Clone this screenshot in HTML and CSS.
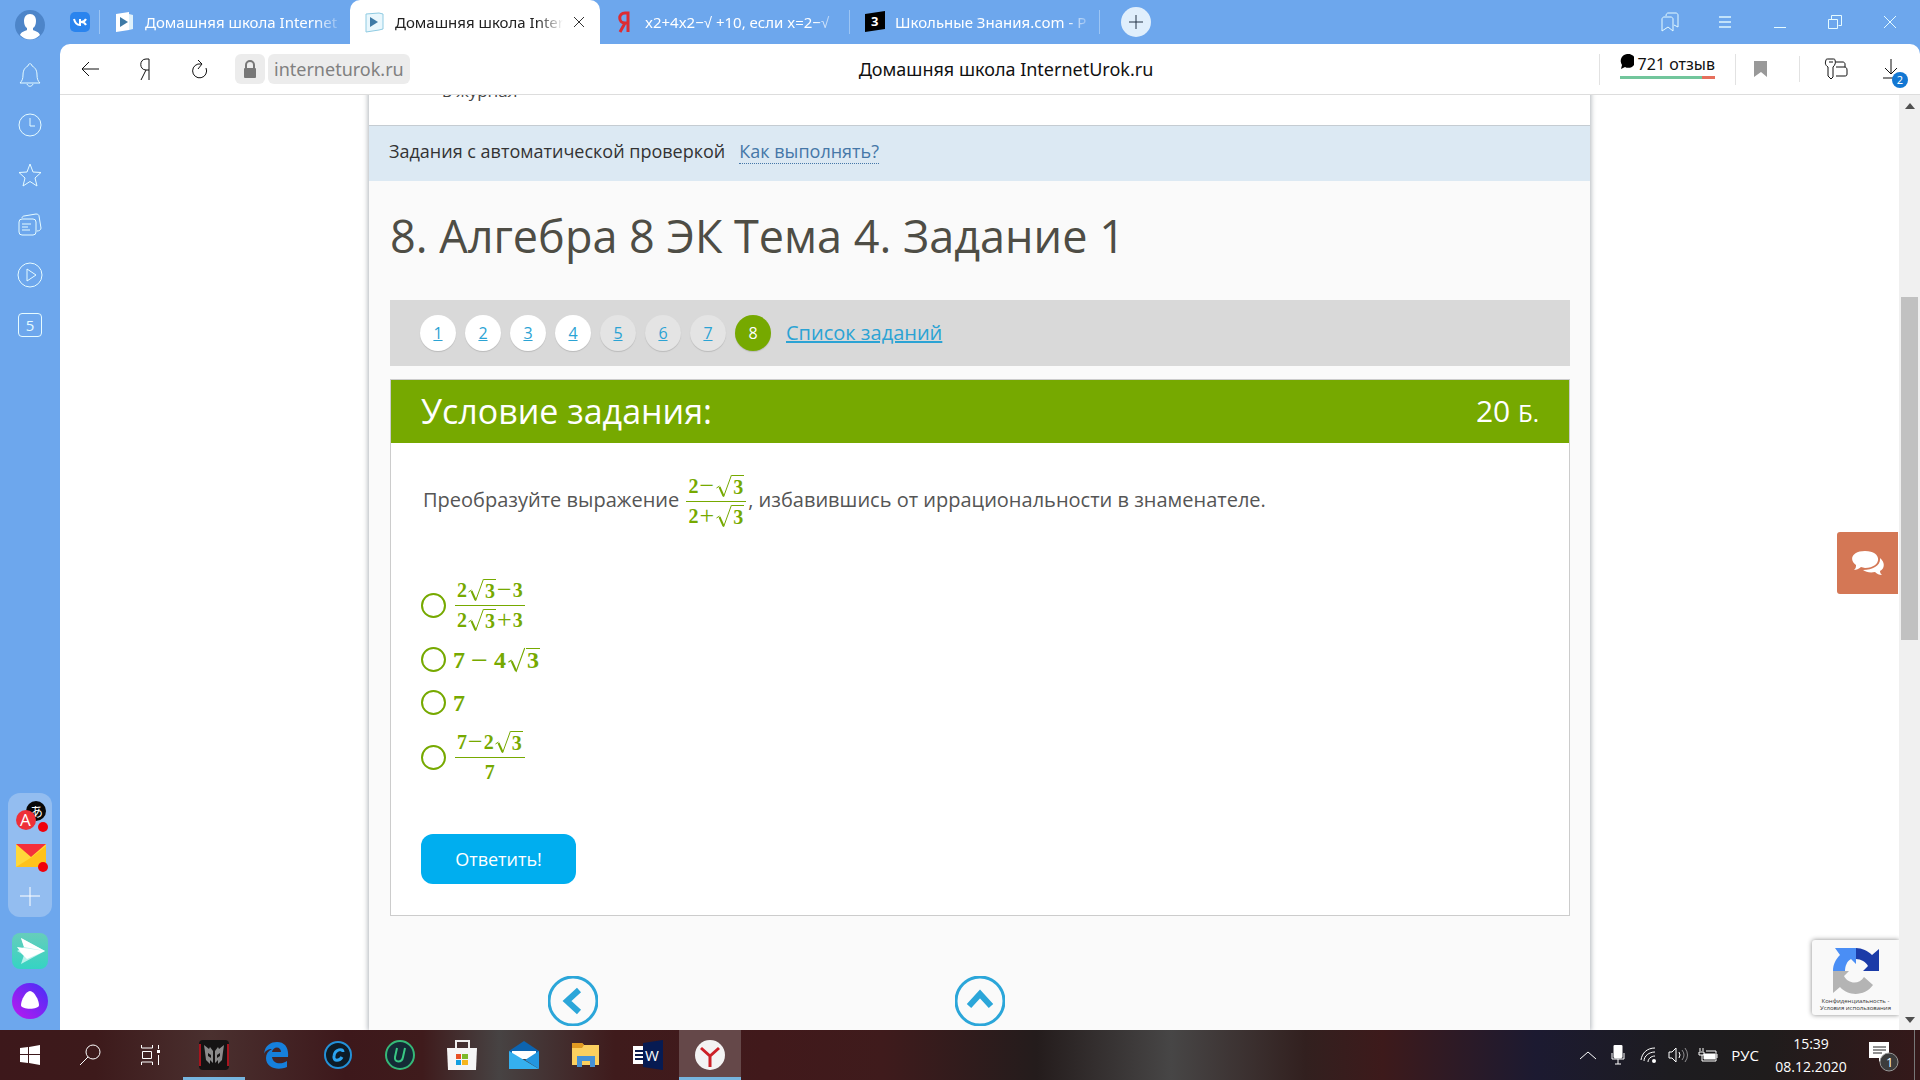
FILE: index.html
```html
<!DOCTYPE html>
<html lang="ru">
<head>
    <meta charset="UTF-8">
    <meta name="viewport" content="width=device-width, initial-scale=1.0">
    <title>Домашняя школа InternetUrok.ru</title>
    <link rel="stylesheet" href="styles.css">
</head>
<body>

    <div class="browser">
        <aside class="sidebar">
            <button class="side-btn" aria-label="Профиль">
                <svg width="30" height="30" viewBox="0 0 30 30"><circle cx="15" cy="15" r="15" fill="#4d85c9"/><path d="M15 4c4 0 6 3 6 7 0 3-1 6-3 7v2c2 1 6 2 7 5-6 6-14 6-20 0 1-3 5-4 7-5v-2c-2-1-3-4-3-7 0-4 2-7 6-7z" fill="#fff"/></svg>
            </button>
            <button class="side-btn" aria-label="Уведомления">
                <svg class="line" width="24" height="26" viewBox="0 0 24 26"><path d="M2 21c2-2 3-4 3-8 0-6 3-8 5-9 0-3 4-3 4 0 2 1 5 3 5 9 0 4 1 6 3 8zM9 22c1 3 5 3 6 0"/></svg>
            </button>
            <button class="side-btn" aria-label="История">
                <svg class="line" width="24" height="24" viewBox="0 0 24 24"><circle cx="12" cy="12" r="11"/><path d="M12 5v8h5"/></svg>
            </button>
            <button class="side-btn" aria-label="Избранное">
                <svg class="line" width="24" height="24" viewBox="0 0 24 24"><path d="M12 1l3 8 8 .5-6 5.500 2 8-7-4.500-7 4.500 2-8-6-5.500 8-.5z"/></svg>
            </button>
            <button class="side-btn" aria-label="Коллекции">
                <svg class="line" width="24" height="24" viewBox="0 0 24 24"><rect x="1" y="6" width="17" height="16" rx="3"/><path d="M4 5c0-1 1-2 2-2l12-2c2 0 3 1 3 2l2 12c0 2-2 3-4 3M4 11h9M4 14h6M4 17h8"/></svg>
            </button>
            <button class="side-btn" aria-label="Видео">
                <svg class="line" width="26" height="26" viewBox="0 0 26 26"><circle cx="13" cy="13" r="12"/><path d="M10 7l9 6-9 6z"/></svg>
            </button>
            <button class="side-btn"><span class="tab-count">5</span></button>

            <div class="side-spacer"></div>

            <div class="side-group">
                <button class="side-app" aria-label="Переводчик">
                    <svg width="34" height="34" viewBox="0 0 34 34"><circle cx="21" cy="12" r="10" fill="#080808"/><text x="15" y="17" font-size="13" fill="#fff" font-family="Noto Sans CJK JP, sans-serif">あ</text><circle cx="11" cy="21" r="10" fill="#ee3038"/><text x="5" y="27" font-size="17" fill="#fff" font-family="Open Sans, sans-serif">A</text><circle cx="28" cy="28" r="5" fill="#f0000c"/></svg>
                </button>
                <button class="side-app" aria-label="Почта">
                    <svg width="34" height="34" viewBox="0 0 34 34"><path d="M1 5h30v23H1z" fill="#ffd83a"/><path d="M31 7v21H1l16-10z" fill="#ffc21c"/><path d="M1 5h30L16 18z" fill="#f5303b"/><circle cx="28" cy="28" r="5" fill="#f0000c"/></svg>
                </button>
                <button class="side-app" aria-label="Добавить">
                    <svg width="34" height="34" viewBox="0 0 34 34"><path d="M15 8v19M5 17h20" fill="none" stroke="#fff"/></svg>
                </button>
            </div>
            <button class="side-btn" aria-label="Телепорт">
                <svg width="36" height="36" viewBox="0 0 36 36"><defs><linearGradient id="mint" x2="0" y2="1"><stop stop-color="#66cdbb"/><stop offset="1" stop-color="#35d4c3"/></linearGradient></defs><rect width="36" height="36" rx="8" fill="url(#mint)"/><path d="M9 5l24 13L9 31l3-9-7-4 7-4z" fill="#b9f2ec"/><path d="M9 5l24 13-21-4zM5 14l28 4-23 3zM10 21l23-3-18 8z" fill="#fff"/></svg>
            </button>
            <button class="side-btn" aria-label="Алиса">
                <svg width="36" height="36" viewBox="0 0 36 36"><defs><linearGradient id="alice" x1="0" y1="1" x2="1" y2="0"><stop stop-color="#bd18ef"/><stop offset="1" stop-color="#4430f8"/></linearGradient></defs><circle cx="18" cy="18" r="18" fill="url(#alice)"/><path d="M18 8c4 0 9 9 9 14 0 5-18 5-18 0 0-5 5-14 9-14z" fill="#fff"/></svg>
            </button>
        </aside>

        <div class="window">
            <header class="tabs">
                <button class="tab tab-pinned" aria-label="ВКонтакте">
                    <svg width="20" height="20" viewBox="0 0 20 20"><rect width="20" height="20" rx="5" fill="#2a84ee"/><path d="M4 7c1 4 3 6 6 6V7M16 7c-1 2-3 3-5 3 2 0 4 1 5 3" fill="none" stroke="#fff" stroke-width="2"/></svg>
                </button>
                <button class="tab">
                    <svg width="20" height="22" viewBox="0 0 20 22"><path d="M1 3l13-2v18L1 21z" fill="#fff"/><path d="M14 3l4 1v14l-4 1" fill="#dff1fb"/><path d="M5 6l8 5-8 5z" fill="#3e7aa6"/></svg>
                    <span class="tab-title">Домашняя школа Internet</span>
                </button>
                <button class="tab tab-active">
                    <svg width="20" height="22" viewBox="0 0 20 22"><path d="M1 3l13-1 4 1v15l-4 1-13 2z" fill="#e9f7fd" stroke="#8fcbe2"/><path d="M5 6l8 5-8 5z" fill="#3e7aa6"/></svg>
                    <span class="tab-title">Домашняя школа Intern</span>
                    <svg width="12" height="12" viewBox="0 0 12 12"><path d="M1 1l10 10M11 1L1 11" fill="none" stroke="#333"/></svg>
                </button>
                <button class="tab tab-divided">
                    <svg width="20" height="22" viewBox="0 0 20 22"><path d="M13 21V2h-3c-7 0-7 10 0 10h3M10 12L5 21" fill="none" stroke="#dd2c32" stroke-width="3"/></svg>
                    <span class="tab-title">x2+4x2−√ +10, если x=2−√</span>
                </button>
                <button class="tab tab-divided">
                    <svg width="20" height="22" viewBox="0 0 20 22"><path d="M0 3l20-3v18L0 21z" fill="#000"/><text x="6" y="15" font-size="13" font-weight="700" fill="#fff" font-family="Open Sans, sans-serif">3</text></svg>
                    <span class="tab-title">Школьные Знания.com - Р</span>
                </button>
                <button class="tab-new" aria-label="Новая вкладка">
                    <svg width="14" height="14" viewBox="0 0 14 14"><path d="M7 0v14M0 7h14" stroke="#234"/></svg>
                </button>
                <div class="window-controls">
                    <button aria-label="Закладки"><svg class="line" width="18" height="20" viewBox="0 0 18 20"><path d="M1 7c0-1 1-2 2-2h7c1 0 2 1 2 2v12l-5-4-6 4zM5 4c0-2 1-3 2-3h8c1 0 2 1 2 2v12l-4-2"/></svg></button>
                    <button aria-label="Меню"><svg class="line" width="12" height="14" viewBox="0 0 12 14"><path d="M0 2h12M0 7h12M0 12h12" stroke-width="2" opacity=".7"/></svg></button>
                    <button aria-label="Свернуть"><svg class="line" width="14" height="14" viewBox="0 0 14 14"><path d="M1 12.500h12"/></svg></button>
                    <button aria-label="Развернуть"><svg class="line" width="14" height="14" viewBox="0 0 14 14"><path d="M.5 4.500h9v9h-9zM3.500 4V.5h10v10h-3"/></svg></button>
                    <button aria-label="Закрыть"><svg class="line" width="14" height="14" viewBox="0 0 14 14"><path d="M1 1l12 12M13 1L1 13"/></svg></button>
                </div>
            </header>

            <div class="toolbar">
                <div class="toolbar-left">
                    <button class="tool" aria-label="Назад"><svg class="dark" width="18" height="16" viewBox="0 0 18 16"><path d="M18 8H1M8 1L1 8l7 7"/></svg></button>
                    <button class="tool" aria-label="Яндекс"><svg class="dark" width="12" height="22" viewBox="0 0 12 22"><path d="M10 22V1H7C0 1 0 12 7 12h3M7 12L2 22"/></svg></button>
                    <button class="tool" aria-label="Обновить"><svg class="dark" width="16" height="20" viewBox="0 0 16 20"><path d="M14 9a7 7 0 1 1-5-4M6 1l4 4-4 5"/></svg></button>
                    <button class="lock" aria-label="Безопасность"><svg width="14" height="18" viewBox="0 0 14 18"><path d="M3 8V5a4 4 0 0 1 8 0v3" fill="none" stroke="#777" stroke-width="2"/><rect x="1" y="8" width="12" height="10" rx="1" fill="#777"/></svg></button>
                    <button class="url">interneturok.ru</button>
                </div>
                <div class="page-title">Домашняя школа InternetUrok.ru</div>
                <div class="toolbar-right">
                    <a class="reviews" href="#"><span class="reviews-text"><svg width="14" height="16" viewBox="0 0 14 16"><path d="M7 0a7 7 0 1 1-2 13l-4 2 1-4A7 7 0 0 1 7 0z"/></svg>721 отзыв</span><span class="rating"></span></a>
                    <button class="bookmark" aria-label="В закладки"><svg width="13" height="16" viewBox="0 0 13 16"><path d="M0 0h13v16l-6-5-7 5z" fill="#999"/></svg></button>
                    <button class="tool" aria-label="Пароли"><svg class="dark" width="24" height="22" viewBox="0 0 24 22"><path d="M4 9C1 7 1 5 2 2c0-1 1-1 2-1h5c1 0 2 0 2 1 1 3 0 5-2 7v10l-2 2-3-3zM5 4h4M12 4h7c1 0 2 1 2 2v3M12 9h8c2 0 3 1 3 3v4c0 2-1 2-3 2h-8"/></svg></button>
                    <button class="tool download" aria-label="Загрузки"><svg class="dark" width="16" height="20" viewBox="0 0 16 20"><path d="M8 0v15M2 9l6 6 6-6M0 19h16"/></svg><span class="badge">2</span></button>
                </div>
            </div>

            <div class="viewport">
                <main class="page">
                    <div class="page-top">в журнал</div>
                    <div class="notice">
                        <span>Задания с автоматической проверкой</span>
                        <a href="#">Как выполнять?</a>
                    </div>
                    <div class="content">
                        <h1>8. Алгебра 8 ЭК Тема 4. Задание 1</h1>
                        <nav class="tasks">
                            <a class="num" href="#">1</a>
                            <a class="num" href="#">2</a>
                            <a class="num" href="#">3</a>
                            <a class="num" href="#">4</a>
                            <a class="num num-done" href="#">5</a>
                            <a class="num num-done" href="#">6</a>
                            <a class="num num-done" href="#">7</a>
                            <span class="num num-current">8</span>
                            <a class="task-list" href="#">Список заданий</a>
                        </nav>
                        <form class="task">
                            <div class="task-head">
                                <h2>Условие задания:</h2>
                                <div class="points">20 <small>Б.</small></div>
                            </div>
                            <div class="task-body">
                                <p class="question">Преобразуйте выражение
                                    <span class="math frac">
                                        <span class="row">2<i>−</i><svg class="radical" viewBox="0 0 16 22"><path class="thin" d="M1 13l3-2M8 22L16 0"/><path class="thick" d="M4 12l4 9"/></svg><span class="root">3</span></span>
                                        <span class="row den">2<i>+</i><svg class="radical" viewBox="0 0 16 22"><path class="thin" d="M1 13l3-2M8 22L16 0"/><path class="thick" d="M4 12l4 9"/></svg><span class="root">3</span></span>
                                    </span>, избавившись от иррациональности в знаменателе.</p>

                                <div class="answers">
                                    <label class="answer tall">
                                        <input type="radio" name="answer">
                                        <span class="math frac">
                                            <span class="row">2<svg class="radical" viewBox="0 0 16 22"><path class="thin" d="M1 13l3-2M8 22L16 0"/><path class="thick" d="M4 12l4 9"/></svg><span class="root">3</span><i>−</i>3</span>
                                            <span class="row den">2<svg class="radical" viewBox="0 0 16 22"><path class="thin" d="M1 13l3-2M8 22L16 0"/><path class="thick" d="M4 12l4 9"/></svg><span class="root">3</span><i>+</i>3</span>
                                        </span>
                                    </label>
                                    <label class="answer">
                                        <input type="radio" name="answer">
                                        <span class="math large"><span class="row">7<i>−</i>4<svg class="radical" viewBox="0 0 16 22"><path class="thin" d="M1 13l3-2M8 22L16 0"/><path class="thick" d="M4 12l4 9"/></svg><span class="root">3</span></span></span>
                                    </label>
                                    <label class="answer">
                                        <input type="radio" name="answer">
                                        <span class="math large"><span class="row">7</span></span>
                                    </label>
                                    <label class="answer tall">
                                        <input type="radio" name="answer">
                                        <span class="math frac">
                                            <span class="row">7<i>−</i>2<svg class="radical" viewBox="0 0 16 22"><path class="thin" d="M1 13l3-2M8 22L16 0"/><path class="thick" d="M4 12l4 9"/></svg><span class="root">3</span></span>
                                            <span class="row den">7</span>
                                        </span>
                                    </label>
                                </div>
                                <button class="submit" type="button">Ответить!</button>
                            </div>
                        </form>
                    </div>
                    <div class="pager">
                        <a href="#" aria-label="Назад"><svg width="50" height="50" viewBox="0 0 50 50"><circle cx="25" cy="25" r="24"/><path d="M31 14L19 25l12 11"/></svg></a>
                        <a href="#" aria-label="Наверх"><svg width="50" height="50" viewBox="0 0 50 50"><circle cx="25" cy="25" r="24"/><path d="M14 30l11-12 11 12"/></svg></a>
                    </div>
                </main>

                <button class="chat" aria-label="Чат">
                    <svg width="32" height="26" viewBox="0 0 32 26"><path d="M28 8c6 5 4 11 0 13 0 2 1 3 2 4-3 0-5-1-7-3-5 1-9 0-12-2 10 0 18-5 17-12z" fill="#fff"/><path d="M13 1c18 0 17 17 0 17l-4-1c-2 2-5 3-7 3 2-2 2-3 2-5C-4 9 1 1 13 1z" fill="#fff"/></svg>
                </button>
                <div class="captcha">
                    <svg width="46" height="46" viewBox="0 0 46 46"><path d="M23 0c6 0 12 3 16 7l7-6v22H30l5-5c-2-4-7-7-12-7z" fill="#1b3ba8"/><path d="M23 0v16l-5-5c-4 2-6 7-6 12H0c0-7 3-12 7-16L2 0z" fill="#4a8ef5"/><path d="M0 23h16l-5 5c4 8 15 9 20 1l9 8c-8 11-24 12-33 2l-7 6z" fill="#b4b4b4"/></svg>
                    <span>Конфиденциальность -<br>Условия использования</span>
                </div>

                <div class="scrollbar">
                    <svg width="10" height="6" viewBox="0 0 10 6"><path d="M0 6l5-6 5 6z" fill="#505050"/></svg>
                    <div class="track"><div class="thumb"></div></div>
                    <svg width="10" height="6" viewBox="0 0 10 6"><path d="M0 0l5 6 5-6z" fill="#505050"/></svg>
                </div>
            </div>
        </div>
    </div>

    <footer class="taskbar">
        <div class="buttons">
            <button class="sys" aria-label="Пуск"><svg width="20" height="20" viewBox="0 0 20 20" fill="#fff"><path d="M0 3l8-1v7H0zM9 2l11-2v9H9zM0 10h8v8l-8-1zM9 10h11v10L9 18z"/></svg></button>
            <button class="sys" aria-label="Поиск"><svg width="22" height="22" viewBox="0 0 22 22" fill="none" stroke="#fff"><circle cx="14" cy="8" r="7"/><path d="M9 13l-8 8"/></svg></button>
            <button class="sys" aria-label="Представление задач"><svg width="22" height="22" viewBox="0 0 22 22" fill="none" stroke="#fff"><path d="M2.500 1v3h11V1M3.500 7.500h9v7h-9zM2.500 21v-3h11v3M19.500 1v4M19.500 11v10"/><path d="M18 6h3v3h-3z" fill="#fff" stroke="none"/></svg></button>
        </div>
        <div class="buttons apps">
            <button class="app running" aria-label="PredatorSense"><svg width="30" height="30" viewBox="0 0 30 30"><rect width="30" height="30" rx="4" fill="#151313"/><path d="M1 4v22M29 4v22" stroke="#a8141e" stroke-width="2"/><path d="M5 5l5 4 1-2 3 4v12l-3-3v4l-4-4-1-8zM25 5l-5 4-1-2-3 4v12l3-3v4l4-4 1-8z" fill="#8b8b8b"/><path d="M9 13l3 2v3l-3-2zM21 13l-3 2v3l3-2z" fill="#151313"/></svg></button>
            <button class="app" aria-label="Edge"><svg width="26" height="28" viewBox="0 0 26 28"><path d="M1 13C2 4 8 1 14 1c8 0 12 6 11 15H9c1 7 9 8 15 4v6C15 30 3 27 3 17c0-4 2-7 6-9-4 0-7 2-8 5zm8-2h9c0-6-8-6-9 0z" fill="#1680dc"/></svg></button>
            <button class="app" aria-label="CCleaner"><svg width="28" height="28" viewBox="0 0 28 28"><circle cx="14" cy="14" r="13" fill="#0d1c27" stroke="#2391d8" stroke-width="2"/><path d="M19 11c0-4-8-3-9 4-1 6 6 5 8 1" fill="none" stroke="#2ba4f0" stroke-width="3"/></svg></button>
            <button class="app" aria-label="Uninstaller"><svg width="30" height="30" viewBox="0 0 30 30"><circle cx="15" cy="15" r="14" fill="#142b36" stroke="#35b978" stroke-width="2"/><path d="M12 8l-2 9c-1 6 7 6 8 0l2-9" fill="none" stroke="#39c884" stroke-width="2"/></svg></button>
            <button class="app" aria-label="Store"><svg width="30" height="30" viewBox="0 0 30 30"><path d="M9 9V1h13v8" fill="none" stroke="#eee" stroke-width="2"/><path d="M0 8h30l-1 22H1z" fill="#f5f5f5"/><path d="M9 14h5v5H9z" fill="#e85024"/><path d="M15 14h6v5h-6z" fill="#7cb928"/><path d="M9 20h5v5H9z" fill="#139fe0"/><path d="M15 20h6v5h-6z" fill="#f6b51b"/></svg></button>
            <button class="app" aria-label="Почта"><svg width="30" height="28" viewBox="0 0 30 28"><path d="M0 10L15 0l15 10v5H0z" fill="#0c64b0"/><path d="M3 10h24v8H3z" fill="#fff"/><path d="M0 10l30 18H0z" fill="#35b0ef"/><path d="M30 10v18L16 19z" fill="#2396df"/></svg></button>
            <button class="app" aria-label="Проводник"><svg width="28" height="24" viewBox="0 0 28 24"><path d="M0 0h10l2 2h15v20H0z" fill="#fbd05f"/><path d="M0 0h10l2 2-2 3H0z" fill="#e09a22"/><path d="M5 24V13h18v11h-5v-6h-8v6z" fill="#4592d6"/></svg></button>
            <button class="app" aria-label="Word"><svg width="30" height="30" viewBox="0 0 30 30"><path d="M0 6h12v18H0z" fill="#fff"/><path d="M2 11h8M2 15h8M2 19h8" stroke="#0b1c4d" stroke-width="2"/><path d="M10 3l20-3v30l-20-3z" fill="#071b52"/><text x="12" y="21" font-size="15" fill="#fff" font-family="Open Sans, sans-serif">W</text></svg></button>
            <button class="app running current" aria-label="Yandex"><svg width="30" height="30" viewBox="0 0 30 30"><circle cx="15" cy="15" r="15" fill="#f3f3f3"/><path d="M6 8l9 8 9-8M15 15v12" fill="none" stroke="#cc2027" stroke-width="3"/></svg></button>
        </div>

        <div class="tray">
            <button aria-label="Скрытые значки"><svg width="16" height="9" viewBox="0 0 16 9"><path d="M0 8l8-7 8 7"/></svg></button>
            <button aria-label="Микрофон"><svg width="14" height="20" viewBox="0 0 14 20"><rect x="3" width="8" height="13" rx="1" fill="#fff"/><path d="M1 8v6h12V8M7 14v5M4 19h6"/></svg></button>
            <button aria-label="Сеть"><svg width="16" height="16" viewBox="0 0 16 16"><path d="M1 13C2 6 7 1 15 1M4 14c0-5 5-9 11-9M8 15c0-3 3-6 7-6"/><circle cx="14" cy="14" r="2" fill="#fff" stroke="none"/></svg></button>
            <button aria-label="Громкость"><svg width="20" height="16" viewBox="0 0 20 16"><path d="M1 5h3l4-4v14l-4-4H1zM11 5q2 3 0 6"/><path d="M14 3q4 5 0 10M17 1q5 7 0 14" opacity=".5"/></svg></button>
            <button aria-label="Батарея"><svg width="20" height="14" viewBox="0 0 20 14"><path d="M2 0v3M5 0v3M1 4h5v3H1zM4 7v6h14V3H8M19 6v4"/><path d="M6 6h11v5H6z" fill="#fff"/></svg></button>
            <button class="lang">РУС</button>
            <button class="clock">15:39<br>08.12.2020</button>
            <button class="notes" aria-label="Центр уведомлений"><svg width="30" height="30" viewBox="0 0 30 30"><path d="M0 0h20v16h-6l-4 4v-4H0z" fill="#fff" stroke="none"/><path d="M4 5h13M4 8h13M4 11h9" stroke="#222"/><circle cx="20" cy="20" r="9" fill="#3c3c3c" stroke="#999"/><text x="17" y="25" font-size="13" fill="#fff" stroke="none" font-family="Open Sans, sans-serif">1</text></svg></button>
        </div>
    </footer>

</body>
</html>
```

FILE: styles.css
```css
* {
    box-sizing: border-box;
}

body {
    margin: 0;
    height: 100vh;
    display: flex;
    flex-direction: column;
    overflow: hidden;
    font-family: "Open Sans", "Noto Sans", sans-serif;
    background: #6da7ed;
}

button {
    padding: 0;
    border: 0;
    background: none;
    font: inherit;
    color: inherit;
}

svg {
    display: block;
    flex: none;
}

.line {
    fill: none;
    stroke: #e6fbff;
}

.dark {
    fill: none;
    stroke: #111;
}

.browser {
    flex: 1;
    min-height: 0;
    display: flex;
}

/* left panel */

.sidebar {
    width: 60px;
    display: flex;
    flex-direction: column;
    align-items: center;
}

.side-btn {
    height: 50px;
    display: grid;
    place-items: center;
}

.tab-count {
    width: 24px;
    height: 24px;
    border: 1px solid #e6fbff;
    border-radius: 4px;
    color: #e6fbff;
    font-size: 15px;
    line-height: 22px;
}

.side-spacer {
    flex: 1;
}

.side-group {
    width: 44px;
    height: 124px;
    margin-bottom: 9px;
    padding: 3px 0 0 7px;
    display: grid;
    grid-template-rows: repeat(3, 40px);
    align-items: center;
    border-radius: 12px;
    background: #93bdf0;
}

.sidebar > :last-child {
    margin-bottom: 4px;
}

/* tabs */

.window {
    flex: 1;
    min-width: 0;
    display: flex;
    flex-direction: column;
}

.tabs {
    height: 44px;
    display: flex;
    align-items: center;
    color: #fff;
    font-family: "Noto Sans", sans-serif;
    font-size: 15px;
}

.tab {
    width: 250px;
    height: 44px;
    padding: 0 5px 0 15px;
    display: flex;
    align-items: center;
    gap: 10px;
    text-align: left;
}

.tab-pinned {
    width: 40px;
    padding: 0 10px;
}

.tab-pinned,
.tab-divided {
    background: linear-gradient(#9cc5f4, #9cc5f4) 100% 50% / 1px 24px no-repeat;
}

.tab-title {
    flex: 1;
    min-width: 0;
    white-space: nowrap;
    mask-image: linear-gradient(to right, #000 85%, transparent);
}

.tab-active {
    padding-right: 15px;
    background: #fff;
    color: #222;
    border-radius: 10px 10px 0 0;
}

.tab-new {
    width: 30px;
    height: 30px;
    margin-left: 21px;
    display: grid;
    place-items: center;
    border-radius: 50%;
    background: #e0effc;
}

.window-controls {
    margin: 0 3px 0 auto;
    display: flex;
}

.window-controls button {
    width: 55px;
    height: 44px;
    display: grid;
    place-items: center;
}

/* toolbar */

.toolbar {
    height: 51px;
    padding: 0 2px;
    display: grid;
    grid-template-columns: 1fr auto 1fr;
    align-items: center;
    background: #fff;
    border-bottom: 1px solid #ddd;
    border-radius: 10px 10px 0 0;
    font-family: "Noto Sans", sans-serif;
}

.toolbar-left,
.toolbar-right {
    display: flex;
    align-items: center;
}

.toolbar-right {
    justify-content: flex-end;
}

.tool {
    width: 55px;
    height: 50px;
    display: grid;
    place-items: center;
}

.lock,
.url {
    height: 30px;
    margin-left: 3px;
    border-radius: 6px;
    background: #ececec;
}

.lock {
    width: 30px;
    margin-left: 8px;
    display: grid;
    place-items: center;
}

.url {
    padding: 0 6px;
    color: #808080;
    font-size: 18px;
    line-height: 30px;
}

.page-title {
    margin-left: 32px;
    font-size: 18px;
    color: #111;
}

.reviews {
    padding: 0 20px 6px;
    border-left: 1px solid #e2e2e2;
    border-right: 1px solid #e2e2e2;
    color: #111;
    font-size: 16px;
    line-height: 20px;
    text-decoration: none;
}

.reviews-text {
    display: flex;
    gap: 4px;
}

.rating {
    display: block;
    height: 3px;
    margin-top: 2px;
    background: linear-gradient(to right, #72c69c 86%, #e66f5c 86%);
}

.bookmark {
    width: 64px;
    height: 26px;
    padding-left: 18px;
    border-right: 1px solid #e2e2e2;
}

.toolbar-right .tool {
    margin-left: 8px;
}

.toolbar-right .download {
    position: relative;
    margin-left: 0;
}

.badge {
    position: absolute;
    right: 10px;
    bottom: 6px;
    width: 16px;
    height: 16px;
    border-radius: 50%;
    background: #1277d3;
    color: #fff;
    font-size: 11px;
    line-height: 16px;
}

/* page */

.viewport {
    position: relative;
    flex: 1;
    min-height: 0;
    display: flex;
    overflow: hidden;
    background: #fff;
}

.page {
    flex: 1;
    max-width: 1221px;
    margin: -8px auto 0;
    padding-top: 8px;
    overflow: hidden;
    background: #fafafa;
    box-shadow: 0 0 5px 1px #b0b4ba;
}

.page-top {
    height: 31px;
    padding: 0 73px 23px;
    display: flex;
    align-items: flex-end;
    overflow: hidden;
    border-bottom: 1px solid #c5ccd2;
    background: #fff;
    color: #444;
    font-size: 17px;
}

.notice {
    height: 55px;
    padding: 0 20px 5px;
    display: flex;
    align-items: center;
    gap: 14px;
    background: #dce9f3;
    color: #333;
    font-size: 18px;
    line-height: 24px;
}

.notice a {
    color: #4577a8;
    border-bottom: 1px dotted #4577a8;
    text-decoration: none;
}

.content {
    padding: 23px 20px 0 21px;
}

h1 {
    margin: 0 0 32px;
    color: #4e4d45;
    font-size: 45px;
    font-weight: 400;
    line-height: 64px;
}

.tasks {
    height: 66px;
    padding: 0 30px;
    display: flex;
    align-items: center;
    gap: 9px;
    background: #d9d9d9;
    font-size: 16px;
}

.num {
    width: 36px;
    height: 36px;
    border-radius: 50%;
    background: #fff;
    box-shadow: 0 1px 1px #bbb;
    color: #2ba3d4;
    line-height: 36px;
    text-align: center;
}

.num-done {
    background: #e4e4e4;
}

.num-current {
    background: #76a900;
    color: #fff;
}

.task-list {
    margin-left: 6px;
    padding-bottom: 2px;
    color: #2ba3d4;
    font-size: 20px;
}

.task {
    margin-top: 13px;
    border: 1px solid #ccc;
    background: #fff;
}

.task-head {
    height: 63px;
    padding: 0 30px 2px;
    display: flex;
    justify-content: space-between;
    align-items: center;
    background: #76a900;
    color: #fff;
}

h2 {
    margin: 0;
    font-size: 34px;
    font-weight: 400;
}

.points {
    font-size: 30px;
}

.points small {
    font-size: 24px;
}

.task-body {
    padding: 27px 30px 31px;
}

.question {
    margin: 0 0 42px;
    padding-left: 2px;
    color: #555;
    font-size: 20px;
    line-height: 60px;
}

.answer {
    height: 43px;
    display: flex;
    align-items: center;
    gap: 7px;
}

.tall {
    height: 66px;
}

.answer input {
    width: 25px;
    height: 25px;
    margin: 0;
    appearance: none;
    border: 2px solid #76a900;
    border-radius: 50%;
}

.math {
    color: #76a900;
    font-family: "Liberation Serif", serif;
    font-size: 20px;
    font-weight: 700;
    line-height: 22px;
}

.frac {
    margin: 0 2px;
    display: inline-flex;
    flex-direction: column;
    vertical-align: middle;
}

.row {
    display: flex;
    justify-content: center;
    padding: 0 2px 3px;
}

.den {
    padding: 3px 2px 0;
    border-top: 1px solid #76a900;
}

.math i {
    padding: 0 1px;
    font-size: 26px;
    font-style: normal;
    font-weight: 400;
}

.radical {
    width: 17px;
    height: 22px;
    fill: none;
    stroke: #76a900;
    overflow: visible;
}

.thick {
    stroke-width: 2;
}

.root {
    padding: 0 1px;
    border-top: 1px solid #76a900;
    line-height: 22px;
}

.large {
    font-size: 24px;
    line-height: 24px;
}

.large .row {
    padding: 0;
}

.large i {
    padding: 0 6px;
    font-size: 30px;
}

.large .radical {
    width: 20px;
    height: 24px;
}

.submit {
    width: 155px;
    height: 50px;
    margin-top: 44px;
    border-radius: 12px;
    background: #00aeef;
    color: #fff;
    font-size: 18px;
}

.pager {
    margin-top: 60px;
    display: grid;
    grid-template-columns: repeat(3, 1fr);
    justify-items: center;
}

.pager svg {
    fill: none;
    stroke: #2ba6d9;
    stroke-width: 3;
}

.pager path {
    stroke-width: 6;
}

/* floating widgets */

.chat {
    position: absolute;
    top: 437px;
    right: 22px;
    width: 61px;
    height: 62px;
    display: grid;
    place-items: center;
    border-radius: 3px 0 0 3px;
    background: #d47755;
}

.captcha {
    position: absolute;
    right: 21px;
    bottom: 15px;
    width: 87px;
    height: 75px;
    padding-top: 8px;
    display: flex;
    flex-direction: column;
    align-items: center;
    border-radius: 3px 0 0 3px;
    background: #f9f9f9;
    box-shadow: 0 0 5px #888;
    color: #333;
    font-size: 6px;
    line-height: 7px;
    text-align: center;
    white-space: nowrap;
}

.captcha span {
    margin-top: 4px;
}

.scrollbar {
    width: 21px;
    padding: 8px 0 7px;
    display: flex;
    flex-direction: column;
    align-items: center;
    z-index: 1;
    background: #f0f0f0;
}

.track {
    flex: 1;
    padding-top: 188px;
}

.thumb {
    width: 17px;
    height: 38%;
    min-height: 343px;
    background: #c1c1c1;
}

/* taskbar */

.taskbar {
    height: 50px;
    display: flex;
    background: linear-gradient(to right, #3d181b 0, #3d1a1b 5%, #4a302f 11%, #3d181b 18%, #3f1b1c 22%, #474343 26%, #3f1b1c 32%, #41191b 40%, #3f1b1c 46%, #241c1c 54%, #474646 61%, #32201f 68%, #3d1a1b 72%, #1c1a31 80%, #1d1c20 87%, #1f1c1c 92%, #35191a 100%);
    color: #fff;
    font-size: 15px;
}

.buttons {
    display: flex;
}

.apps {
    margin-left: 3px;
}

.sys,
.app {
    width: 60px;
    display: grid;
    place-items: center;
}

.app {
    width: 62px;
}

.running {
    box-shadow: inset 0 -3px #76b5df;
}

.current {
    background: #654849;
}

.tray {
    margin-left: auto;
    padding-right: 5px;
    display: flex;
    align-items: center;
}

.tray button {
    width: 30px;
    display: grid;
    place-items: center;
}

.tray svg {
    fill: none;
    stroke: #fff;
}

.tray .lang {
    width: 44px;
}

.tray .clock {
    width: 88px;
    display: block;
    line-height: 23px;
    font-size: 14px;
}

.tray .notes {
    width: 60px;
    height: 50px;
    padding: 3px 2px 0 0;
    border-right: 1px solid #777;
}
```
